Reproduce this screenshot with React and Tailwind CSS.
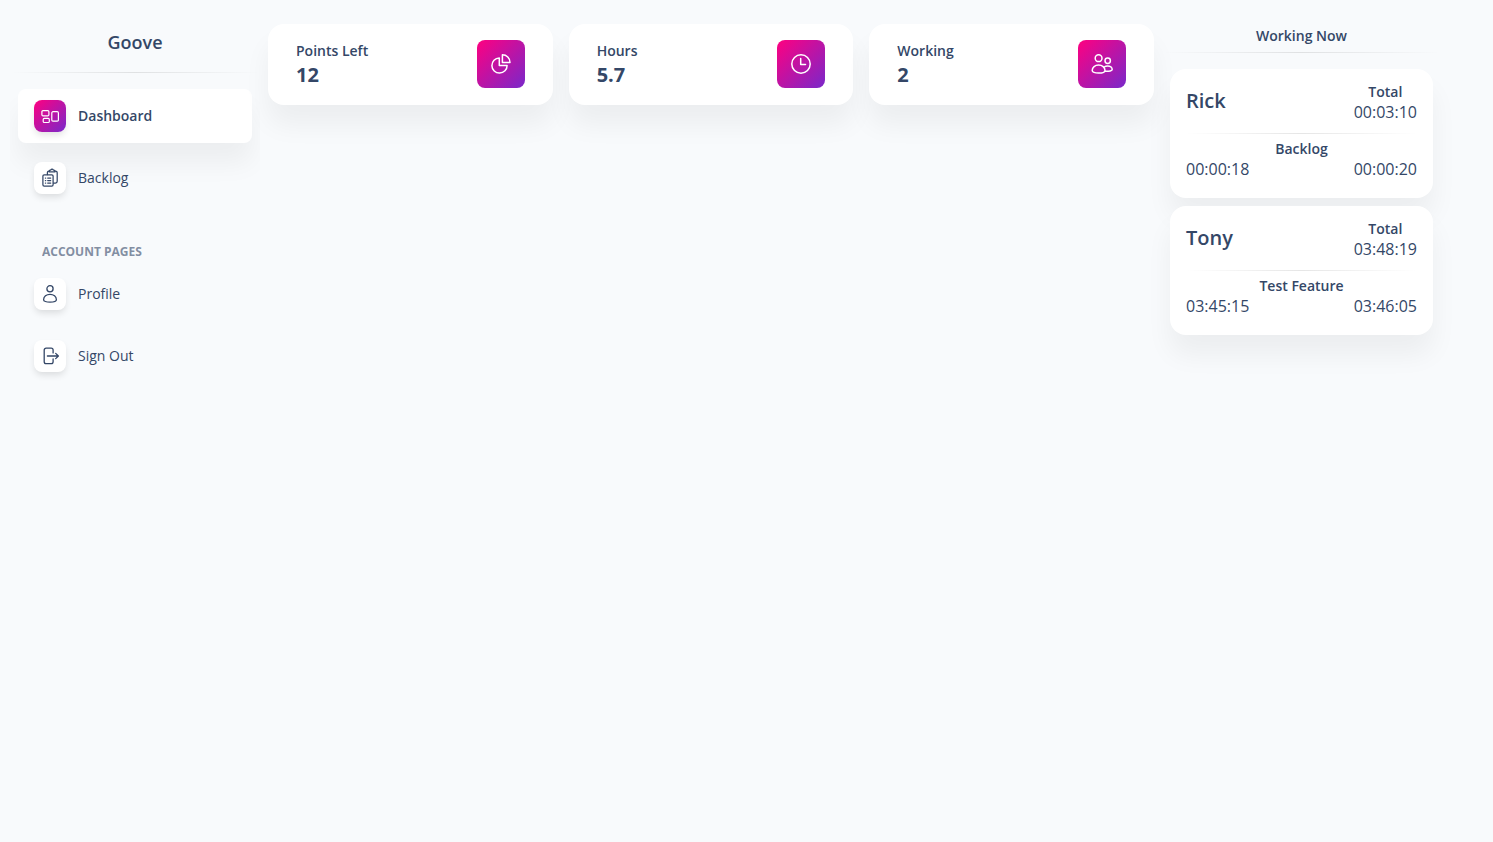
const svgBase = {
  fill: "none",
  stroke: "currentColor",
  strokeLinecap: "round",
  strokeLinejoin: "round",
  "aria-hidden": true,
};

function DashboardIcon() {
  return (
    <svg {...svgBase} viewBox="0 0 20 20" strokeWidth="1.2" className="size-5">
      <rect x="1.9" y="4.7" width="7" height="5.2" rx="1.1" />
      <rect x="3.2" y="12.4" width="6.1" height="4.1" rx="1.1" />
      <rect x="11.8" y="5.7" width="6.6" height="9.5" rx="1.2" />
    </svg>
  );
}

function BacklogIcon() {
  return (
    <svg {...svgBase} viewBox="0 0 20 20" strokeWidth="1.25" className="size-5">
      <path d="M7.4 6.6V4.6a1.6 1.6 0 0 1 1.6-1.6h.2M14.9 3h.4A1.9 1.9 0 0 1 17.2 4.9v8.4a1.7 1.7 0 0 1-1.7 1.7h-2" />
      <path d="M9.2 3.9V3a1 1 0 0 1 1-1h.6a1.4 1.4 0 0 1 2.5 0h.6a1 1 0 0 1 1 1v.9z" />
      <rect x="2.9" y="6.8" width="10.2" height="11.3" rx="1.3" />
      <path d="M5.4 10h.3M7.7 10h3M5.4 12.5h.3M7.7 12.5h3M5.4 15h.3M7.7 15h3" />
    </svg>
  );
}

function ProfileIcon() {
  return (
    <svg {...svgBase} viewBox="0 0 20 20" strokeWidth="1.3" className="size-5">
      <circle cx="10" cy="4.8" r="3.1" />
      <path d="M3.6 15.7C3.6 12.6 6.4 10.3 10 10.3s6.4 2.3 6.4 5.4c0 1.6-2.6 2.4-6.4 2.4s-6.4-.8-6.4-2.4z" />
    </svg>
  );
}

function SignOutIcon() {
  return (
    <svg {...svgBase} viewBox="0 0 20 20" strokeWidth="1.3" className="size-5">
      <path d="M13.1 6.9V4.1a1.9 1.9 0 0 0-1.9-1.9H6.1a1.9 1.9 0 0 0-1.9 1.9v11.6a1.9 1.9 0 0 0 1.9 1.9h5.1a1.9 1.9 0 0 0 1.9-1.9v-2.8" />
      <path d="M7.4 10h10.8M15.7 7.4l2.7 2.6-2.7 2.6" />
    </svg>
  );
}

function PieIcon() {
  return (
    <svg {...svgBase} viewBox="0 0 24 24" strokeWidth="1.5" className="size-6">
      <path d="M10.3 5.9a7.6 7.6 0 1 0 7.8 7.5h-7.8z" />
      <path d="M13.4 2.8a7.6 7.6 0 0 1 7.6 7.6h-7.6z" />
    </svg>
  );
}

function ClockIcon() {
  return (
    <svg {...svgBase} viewBox="0 0 24 24" strokeWidth="1.5" className="size-6">
      <circle cx="12" cy="12" r="9.2" />
      <path d="M11.7 6.5v5.9h4.8" />
    </svg>
  );
}

function PeopleIcon() {
  return (
    <svg {...svgBase} viewBox="0 0 24 24" strokeWidth="1.5" className="size-6">
      <circle cx="8.6" cy="6.2" r="3.4" />
      <circle cx="17.7" cy="8.7" r="2.7" />
      <path d="M2.2 18.4c0-3 2.8-5.3 6.4-5.3s6.4 2.3 6.4 5.3c0 1.8-2.6 2.7-6.4 2.7s-6.4-.9-6.4-2.7z" />
      <path d="M14.2 15c.9-.7 2.1-1.1 3.4-1.1 2.6 0 4.6 1.6 4.6 3.6 0 1.3-2.8 1.9-7 1.8" />
    </svg>
  );
}

const mainLinks = [
  { label: "Dashboard", Icon: DashboardIcon, active: true },
  { label: "Backlog", Icon: BacklogIcon },
];

const accountLinks = [
  { label: "Profile", Icon: ProfileIcon },
  { label: "Sign Out", Icon: SignOutIcon },
];

const stats = [
  { label: "Points Left", value: "12", Icon: PieIcon },
  { label: "Hours", value: "5.7", Icon: ClockIcon },
  { label: "Working", value: "2", Icon: PeopleIcon },
];

const workers = [
  { name: "Rick", total: "00:03:10", task: "Backlog", start: "00:00:18", end: "00:00:20" },
  { name: "Tony", total: "03:48:19", task: "Test Feature", start: "03:45:15", end: "03:46:05" },
];

function Divider() {
  return <hr className="h-px border-0 bg-linear-to-r from-transparent via-black/10 to-transparent" />;
}

function NavLink({ label, Icon, active }) {
  return (
    <li>
      <a
        href="#"
        aria-current={active ? "page" : undefined}
        className={
          active
            ? "flex h-[54px] items-center gap-3 rounded-lg bg-white px-4 text-sm font-semibold shadow-[0_20px_27px_0_rgba(0,0,0,0.05)]"
            : "flex h-[54px] items-center gap-3 rounded-lg px-4 text-sm"
        }
      >
        <span
          className={
            active
              ? "grid size-8 place-items-center rounded-lg bg-linear-[135deg,#ff0080,#7928ca] text-white shadow-[0_4px_7px_-1px_rgba(0,0,0,0.12)]"
              : "grid size-8 place-items-center rounded-lg bg-white shadow-[0_4px_7px_-1px_rgba(0,0,0,0.12)]"
          }
        >
          <Icon />
        </span>
        {label}
      </a>
    </li>
  );
}

function StatCard({ label, value, Icon }) {
  return (
    <section className="flex items-center justify-between rounded-2xl bg-white px-7 pt-4 pb-[17px] shadow-[0_20px_27px_0_rgba(0,0,0,0.05)]">
      <div>
        <h2 className="text-sm leading-[22px] font-semibold">{label}</h2>
        <p className="text-xl leading-[26px] font-bold">{value}</p>
      </div>
      <div className="grid size-12 place-items-center rounded-lg bg-linear-[135deg,#ff0080,#7928ca] text-white">
        <Icon />
      </div>
    </section>
  );
}

function WorkerCard({ name, total, task, start, end }) {
  return (
    <li className="rounded-2xl bg-white px-4 pt-[13px] pb-5 shadow-[0_20px_27px_0_rgba(0,0,0,0.05)]">
      <div className="flex justify-between pb-[11px]">
        <h3 className="text-xl leading-[38px] font-semibold">{name}</h3>
        <div className="text-center">
          <p className="text-sm leading-5 font-semibold">Total</p>
          <p className="text-base leading-5">{total}</p>
        </div>
      </div>
      <Divider />
      <p className="pt-1 text-center text-sm leading-[22px] font-semibold">{task}</p>
      <div className="flex justify-between text-base leading-[18px]">
        <span>{start}</span>
        <span>{end}</span>
      </div>
    </li>
  );
}

export default function App() {
  return (
    <div className="flex min-h-screen bg-slate-50 font-['Open_Sans',sans-serif] text-[#344767]">
      <aside className="ml-2.5 w-[250px] shrink-0 overflow-hidden pb-4">
        <h1 className="pt-7 pb-4 text-center text-lg leading-7 font-semibold">Goove</h1>
        <Divider />
        <nav className="px-2 pt-4">
          <ul className="flex flex-col gap-2">
            {mainLinks.map((link) => (
              <NavLink key={link.label} {...link} />
            ))}
          </ul>
          <h2 className="px-6 pt-9 pb-1 text-xs leading-[22px] font-bold uppercase opacity-60">Account pages</h2>
          <ul className="flex flex-col gap-2">
            {accountLinks.map((link) => (
              <NavLink key={link.label} {...link} />
            ))}
          </ul>
        </nav>
      </aside>
      <main className="flex flex-1 items-start gap-2 pt-6 pr-[52px] pl-2">
        <div className="grid flex-1 grid-cols-3 gap-4">
          {stats.map((stat) => (
            <StatCard key={stat.label} {...stat} />
          ))}
        </div>
        <section className="w-[279px] shrink-0">
          <h2 className="pb-1 text-center text-sm leading-6 font-semibold">Working Now</h2>
          <Divider />
          <ul className="flex flex-col gap-2 px-2 pt-4">
            {workers.map((worker) => (
              <WorkerCard key={worker.name} {...worker} />
            ))}
          </ul>
        </section>
      </main>
    </div>
  );
}
